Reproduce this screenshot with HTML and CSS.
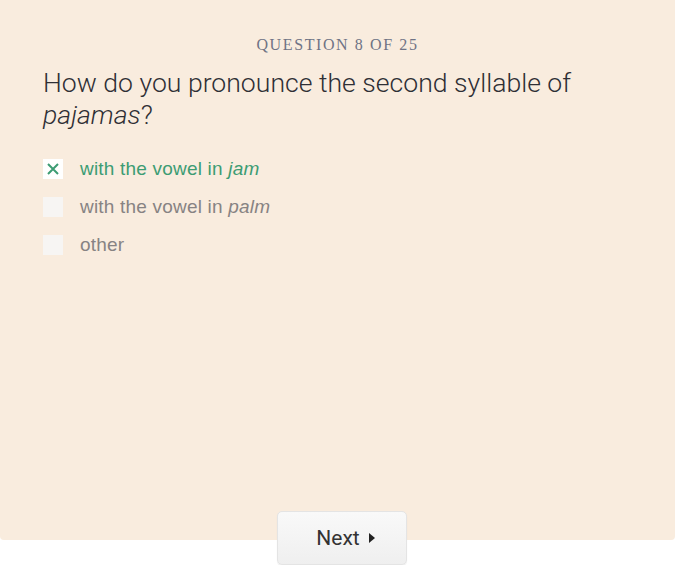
FILE: index.html
```html
<!DOCTYPE html>
<html lang="en">

<head>
  <meta charset="UTF-8" />
  <title>Quiz</title>
  <link rel="stylesheet" href="styles.css">
</head>

<body>
  <main class="quiz">
    <section class="card">
      <p class="counter">Question 8 of 25</p>
      <h2 class="question">How do you pronounce the second syllable of <em>pajamas</em>?</h2>
      <ul class="options">
        <li class="option selected">
          <span class="box">
            <svg width="14" height="14" viewBox="0 0 14 14"><path d="M2 2 L12 12 M12 2 L2 12" stroke="#3d9c73" stroke-width="2" fill="none" /></svg>
          </span>
          <span>with the vowel in <em>jam</em></span>
        </li>
        <li class="option">
          <span class="box"></span>
          <span>with the vowel in <em>palm</em></span>
        </li>
        <li class="option">
          <span class="box"></span>
          <span>other</span>
        </li>
      </ul>
    </section>
    <div class="actions">
      <button class="next">Next <span class="caret"></span></button>
    </div>
  </main>
</body>

</html>
```
FILE: styles.css
```css
* {
  box-sizing: border-box;
}

html,
body {
  margin: 0;
  padding: 0;
  background: #fff;
  font-family: Roboto, "Liberation Sans", sans-serif;
  color: #333;
}

.quiz {
  width: 675px;
}

.card {
  background: #f9ecde;
  height: 540px;
  padding: 36px 43px 0;
  border-radius: 0 0 4px 4px;
}

.counter {
  margin: 0;
  text-align: center;
  font-family: "Liberation Serif", serif;
  font-size: 16px;
  letter-spacing: 1.6px;
  text-transform: uppercase;
  color: #6f7385;
}

.question {
  margin: 13px 0 0;
  font-size: 26.6px;
  font-weight: 300;
  line-height: 32px;
  color: #2f2f35;
}

.options {
  list-style: none;
  margin: 28px 0 0;
  padding: 0;
  display: flex;
  flex-direction: column;
  gap: 18px;
}

.option {
  display: flex;
  align-items: center;
  gap: 17px;
  font-family: "Liberation Sans", Arial, sans-serif;
  font-size: 19px;
  letter-spacing: 0.2px;
  line-height: 20px;
  color: #878383;
}

.option.selected {
  color: #3d9c73;
}

.box {
  width: 20px;
  height: 20px;
  background: #f7f5f3;
  display: flex;
  align-items: center;
  justify-content: center;
}

.selected .box {
  background: #fff;
}

.actions {
  display: flex;
  justify-content: center;
  margin-top: -29px;
  padding-left: 8px;
}

.next {
  width: 130px;
  height: 54px;
  padding: 0 0 0 8px;
  border: 1px solid #e4e4e4;
  border-radius: 5px;
  background: linear-gradient(#f9f9f9, #efefef);
  box-shadow: 0 1px 1px rgba(0, 0, 0, 0.08);
  font-family: Roboto, "Liberation Sans", sans-serif;
  font-size: 21px;
  color: #333;
  display: flex;
  align-items: center;
  justify-content: center;
  gap: 9px;
  cursor: pointer;
}

.caret {
  width: 0;
  height: 0;
  border-top: 5px solid transparent;
  border-bottom: 5px solid transparent;
  border-left: 6px solid #222;
}
```
